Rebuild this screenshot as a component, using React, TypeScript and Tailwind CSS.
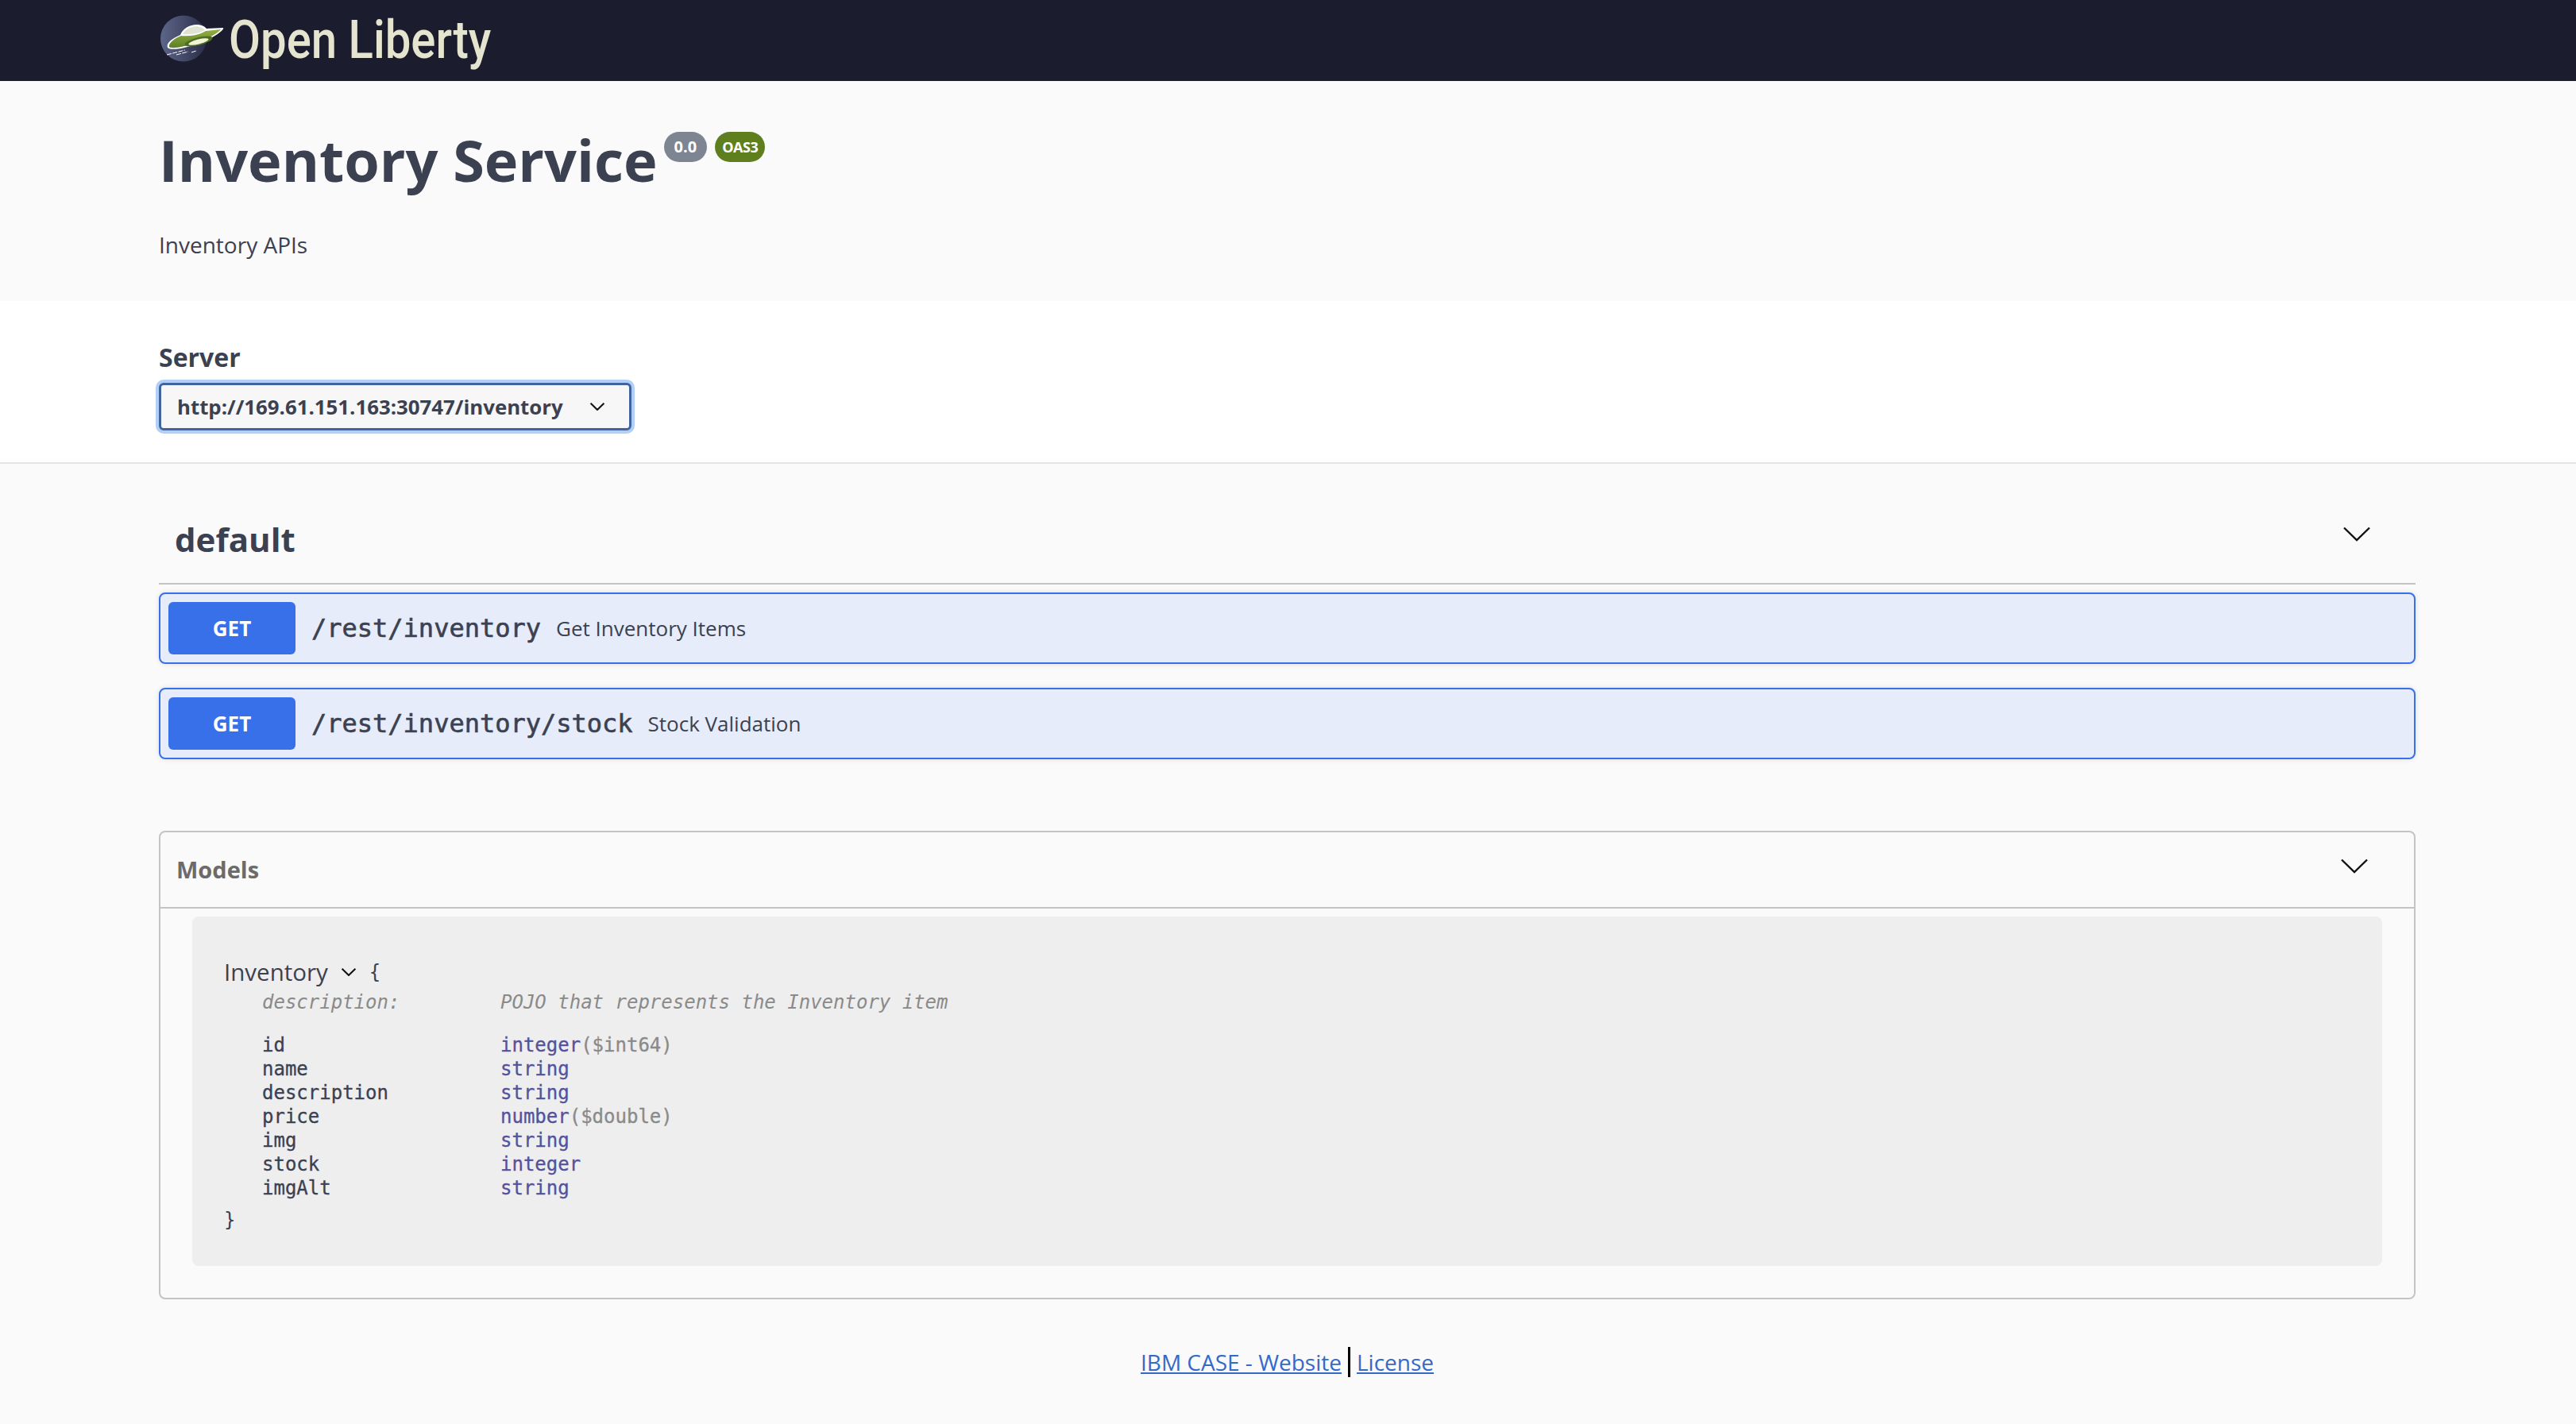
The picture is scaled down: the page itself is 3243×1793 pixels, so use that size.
import React from "react";

const sans = "font-['Open_Sans',sans-serif]";
const mono = "font-['DejaVu_Sans_Mono',monospace]";

// swagger-ui's arrow icon
const Chevron = ({ className, weight = 2.4 }: { className: string; weight?: number }) => (
  <svg viewBox="0 0 34 19" fill="none" stroke="#111" strokeWidth={weight} className={className}>
    <path d="M1 1.5 L17 17 L33 1.5" />
  </svg>
);

const Logo = () => (
  <svg viewBox="0 0 84 64" className="h-[64px] w-[84px] shrink-0">
    <defs>
      <linearGradient id="moon" x1="0" x2="1" y1="0" y2="0">
        <stop offset="0" stopColor="#5d6689" />
        <stop offset="1" stopColor="#2a2d48" />
      </linearGradient>
      <linearGradient id="hull" x1="0" x2="0" y1="0" y2="1">
        <stop offset="0" stopColor="#93b044" />
        <stop offset="1" stopColor="#5d7f25" />
      </linearGradient>
    </defs>
    <circle cx="30" cy="29.5" r="29" fill="url(#moon)" />
    <path d="M10 41 C8 36 14 30 26 25 C30 13 50 7 59 17 L80 16 C82 19 66 30 46 37 C30 42 14 45 10 41 Z" fill="#fff" />
    <path d="M29 24 C33 15 49 10 57 19 C48 24 38 25 29 24 Z" fill="#dfe3d2" />
    <path d="M27 26 C38 27 50 25 58 20 L77 18 C74 22 62 30 45 35 C30 40 15 43 12 40 C11 36 17 30 27 26 Z" fill="url(#hull)" />
    <ellipse cx="49" cy="33" rx="18" ry="5" transform="rotate(-14 49 33)" fill="#4f6d22" />
    <ellipse cx="49" cy="33.5" rx="13" ry="3" transform="rotate(-14 49 33.5)" fill="#f1f3d8" />
    <path d="M9 50 L32 44 M21 50 L36 46 M40 47 L46 45" stroke="#fff" strokeWidth="1" strokeDasharray="6 1.5" />
  </svg>
);

const OpRow = ({ path, summary }: { path: string; summary: string }) => (
  <div className="flex h-[90px] items-center rounded-lg border-2 border-[#3770e8] bg-[#e6ecf9] pl-[10px] shadow-[0_0_6px_rgba(0,0,0,0.12)]">
    <div className={`${sans} flex h-[66px] w-[160px] items-center justify-center rounded-md bg-[#3770e8] text-[26px] font-bold text-white`}>
      GET
    </div>
    <span className={`${mono} ml-[20px] text-[32px] leading-none text-[#3b4151] [-webkit-text-stroke:0.6px_#3b4151]`}>{path}</span>
    <span className={`${sans} ml-[19px] text-[26px] text-[#3b4151]`}>{summary}</span>
  </div>
);

const props = [
  ["id", "integer", "($int64)"],
  ["name", "string", ""],
  ["description", "string", ""],
  ["price", "number", "($double)"],
  ["img", "string", ""],
  ["stock", "integer", ""],
  ["imgAlt", "string", ""],
];

export default function App() {
  return (
    <div className={`${sans} min-h-[1793px] bg-[#fafafa] text-[#3b4151]`}>
      <header className="flex h-[102px] items-center gap-[3px] bg-[#1b1c2e] pl-[201px]">
        <Logo />
        <span className="origin-left scale-x-[0.88] font-['Roboto',sans-serif] text-[66px] font-medium leading-none text-[#e5e4cf]">
          Open Liberty
        </span>
      </header>

      <section className="h-[277px] pl-[200px] pr-[202px] pt-[54px]">
        <div className="flex items-start">
          <h1 className="text-[72px] font-bold leading-[90px]">Inventory Service</h1>
          <span className="ml-[8px] mt-[10px] rounded-full bg-[#7d8492] px-[13px] py-[5px] text-[20px] font-bold leading-[28px] text-white">0.0</span>
          <span className="ml-[10px] mt-[10px] rounded-full bg-[#5f7f1f] px-[9px] py-[5px] text-[18px] font-bold leading-[28px] tracking-tight text-white">OAS3</span>
        </div>
        <p className="mt-[42px] text-[28px] leading-[40px]">Inventory APIs</p>
      </section>

      <section className="h-[205px] border-b-2 border-[#e4e4e4] bg-white pl-[200px] pr-[202px] pt-[51px]">
        <div className="text-[32px] font-bold leading-[40px]">Server</div>
        <div className="mt-[12px] flex h-[60px] w-[595px] items-center justify-between rounded-md border-[3px] border-[#41649f] bg-[#f7f7f7] pl-[20px] pr-[30px] text-[25.8px] font-bold shadow-[0_0_0_4px_rgba(100,160,240,0.5)]">
          <span>http://169.61.151.163:30747/inventory</span>
          <Chevron className="h-[10px] w-[20px]" weight={4} />
        </div>
      </section>

      <main className="pl-[200px] pr-[202px]">
        <div className="flex h-[152px] items-end justify-between border-b-2 border-[#c4c4c8] pb-[25px] pl-[20px] pr-[57px]">
          <h2 className="text-[42px] font-bold leading-[60px]">default</h2>
          <Chevron className="mb-[27px] h-[19px] w-[34px]" />
        </div>

        <div className="mt-[10px] flex flex-col gap-[30px]">
          <OpRow path="/rest/inventory" summary="Get Inventory Items" />
          <OpRow path="/rest/inventory/stock" summary="Stock Validation" />
        </div>

        <div className="mt-[90px] h-[590px] rounded-lg border-2 border-[#c4c4c8]">
          <div className="flex h-[96px] items-center justify-between border-b-2 border-[#c4c4c8] pl-[20px] pr-[58px]">
            <h4 className="text-[29px] font-bold text-[#6b6b6b]">Models</h4>
            <Chevron className="mb-[10px] h-[19px] w-[34px]" />
          </div>
          <div className="mx-[40px] mt-[10px] h-[440px] rounded-lg bg-[#eeeeee] pl-[40px] pt-[50px]">
            <div className="flex h-[40px] items-center">
              <span className="text-[29.5px]">Inventory</span>
              <Chevron className="ml-[16px] h-[10px] w-[20px]" weight={4} />
              <span className={`${mono} ml-[16px] text-[24px]`}>{"{"}</span>
            </div>
            <div className={`${mono} ml-[48px] mt-[3px] text-[24px] leading-[30px]`}>
              <div className="flex italic text-[#8a8a8a]">
                <span className="w-[300px]">description:</span>
                <span>POJO that represents the Inventory item</span>
              </div>
              <div className="mt-[24px] [-webkit-text-stroke:0.3px]">
                {props.map(([name, type, format]) => (
                  <div className="flex" key={name}>
                    <span className="w-[300px]">{name}</span>
                    <span className="text-[#55529b]">{type}</span>
                    <span className="text-[#8a8a8a]">{format}</span>
                  </div>
                ))}
              </div>
            </div>
            <div className={`${mono} mt-[10px] text-[24px] leading-[30px]`}>{"}"}</div>
          </div>
        </div>

        <footer className="mt-[58px] flex items-center justify-center text-[28px] text-[#3569c8]">
          <a href="#" className="underline">IBM CASE - Website</a>
          <span className="mx-[8px] h-[38px] w-[3px] bg-black" />
          <a href="#" className="underline">License</a>
        </footer>
      </main>
    </div>
  );
}
